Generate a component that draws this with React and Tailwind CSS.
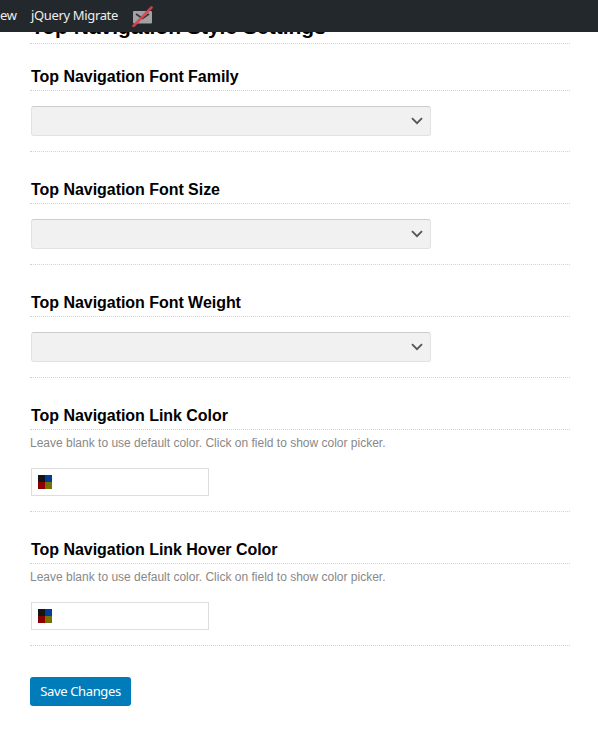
import React from "react";

const SANS = "font-['Liberation_Sans',Arial,sans-serif]";
const UI = "font-['Noto_Sans','Open_Sans',sans-serif]";

const Divider = ({ className = "" }) => (
    <div className={`ml-[30px] w-[540px] border-t border-dotted border-[#d2d2d2] ${className}`} />
);

const Title = ({ children }) => (
    <>
        <h3 className={`ml-[31px] h-[21px] text-[16px] leading-[21px] font-bold tracking-[-0.04px] text-black ${SANS}`}>
            {children}
        </h3>
        <Divider className="mt-[3px]" />
    </>
);

const SelectRow = ({ title }) => (
    <section className="pt-[22px]">
        <Title>{title}</Title>
        <div className="ml-[31px] mt-[15px] flex h-[30px] w-[400px] items-center justify-end rounded-[3px] border border-[#e2e2e2] border-t-[#cccccc] bg-[#f1f1f1] pr-[7px]">
            <svg width="12" height="8" viewBox="0 0 12 8" fill="none" stroke="#555555" strokeWidth="1.8">
                <path d="M1 1.2 6 6.2 11 1.2" />
            </svg>
        </div>
        <Divider className="mt-[15px] mb-[5px]" />
    </section>
);

const ColorRow = ({ title }) => (
    <section className="pt-[22px]">
        <Title>{title}</Title>
        <p className={`ml-[30px] mt-[6px] h-[15px] text-[12px] leading-[15px] text-[#888888] ${SANS}`}>
            Leave blank to use default color. Click on field to show color picker.
        </p>
        <div className="ml-[31px] mt-[17px] flex h-[28px] w-[178px] items-center border border-[#dddddd] bg-white pl-[6px]">
            <div className="grid h-[14px] w-[14px] grid-cols-2 grid-rows-2">
                <span className="bg-[#151515]" />
                <span className="bg-[#003c9e]" />
                <span className="bg-[#8a0000]" />
                <span className="bg-[#757000]" />
            </div>
        </div>
        <Divider className="mt-[15px] mb-[5px]" />
    </section>
);

const TopBar = () => (
    <div className={`absolute inset-x-0 top-0 z-10 flex h-[32px] items-center overflow-hidden bg-[#23282d] text-[13px] tracking-[-0.35px] text-[#eeeeee] ${UI}`}>
        <span className="w-[31px] pr-[15px] text-right">ew</span>
        <span>jQuery Migrate</span>
        <svg className="ml-[13px]" width="22" height="22" viewBox="0 0 22 22">
            <rect x="2" y="6" width="19" height="12.5" rx="1" fill="#a0a2a5" />
            <path d="M5 9 11.5 13.5 18 9" fill="none" stroke="#33373b" strokeWidth="1.6" />
            <path d="M2.5 21 20.5 2.5" stroke="#e0424a" strokeWidth="2.6" strokeLinecap="round" opacity="0.9" />
        </svg>
    </div>
);

export default function App() {
    return (
        <div className="relative h-[732px] w-[598px] overflow-hidden bg-white">
            <TopBar />
            <div className="pt-[15px]">
                <h2 className={`ml-[31px] h-[28px] text-[21px] leading-[24px] font-bold text-black ${SANS}`}>
                    Top Navigation Style Settings
                </h2>
                <Divider />
            </div>
            <div>
                <SelectRow title="Top Navigation Font Family" />
                <SelectRow title="Top Navigation Font Size" />
                <SelectRow title="Top Navigation Font Weight" />
                <ColorRow title="Top Navigation Link Color" />
                <ColorRow title="Top Navigation Link Hover Color" />
            </div>
            <button className={`ml-[30px] mt-[26px] h-[29px] w-[101px] rounded-[3px] bg-[#007cba] text-[13px] tracking-[-0.35px] text-white ${UI}`}>
                Save Changes
            </button>
        </div>
    );
}
